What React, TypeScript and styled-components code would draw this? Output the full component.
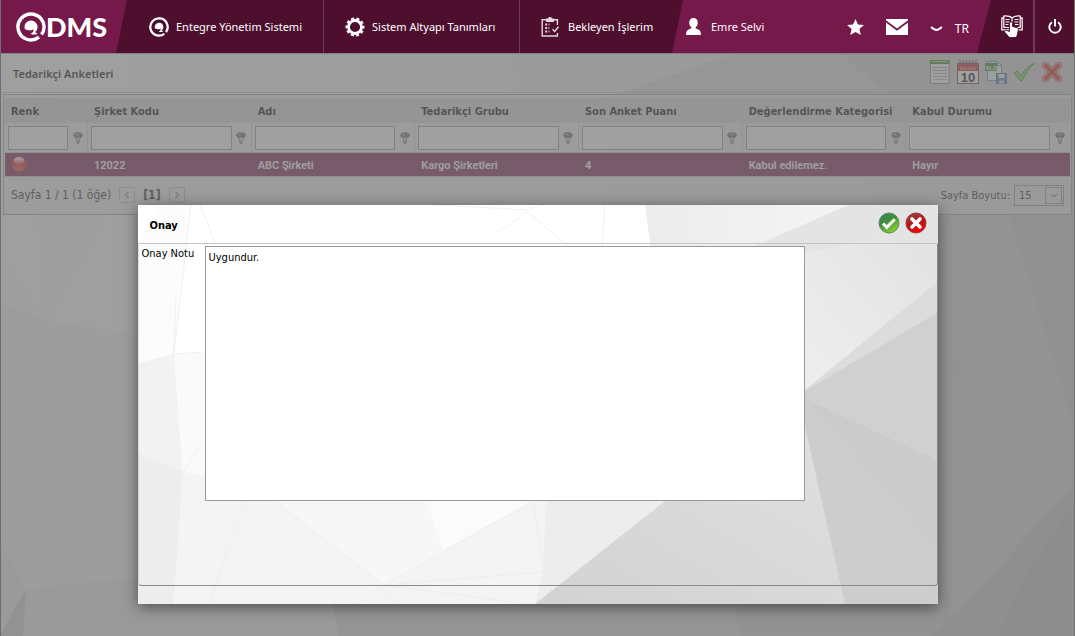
import React from "react";
import styled, { createGlobalStyle, css } from "styled-components";

const uiFont = '"DejaVu Sans Condensed", "DejaVu Sans", sans-serif';
const menuFont = '"Noto Sans", "Open Sans", sans-serif';
const plum = "#75184a";
const darkPlum = "#4e0f2f";

const GlobalStyle = createGlobalStyle`
  *, *::before, *::after { box-sizing: border-box; }
  html, body, #root { height: 100%; }
  body { margin: 0; background: #6e6e6e; font: 11px ${uiFont}; color: #000; }
  button { font: inherit; color: inherit; background: none; border: 0; padding: 0; cursor: pointer; }
`;

const Shell = styled.div`
  min-height: 100%;
  display: flex;
  flex-direction: column;
  padding: 0 1px;
`;

/* ---------- top bar ---------- */

const TopBar = styled.header`
  display: flex;
  height: 53px;
  flex: none;
  background: ${darkPlum};
  color: #fff;
  font: 11px ${menuFont};
`;

const Brand = styled.a`
  display: flex;
  align-items: center;
  width: 126px;
  padding-left: 15px;
  background: ${plum};
  color: #fff;
  text-decoration: none;
  clip-path: polygon(0 0, 100% 0, calc(100% - 11px) 100%, 0 100%);
`;

const BrandText = styled.span`
  font: 900 27px/30px Lato, sans-serif;
`;

const Menu = styled.nav`
  display: flex;
  padding-left: 1px;
`;

const MenuItem = styled.a`
  display: flex;
  align-items: center;
  gap: 7px;
  min-width: 196px;
  padding: 0 18px 0 21px;
  color: #fff;
  text-decoration: none;
  white-space: nowrap;
  border-right: 1px solid #6b3a55;
  svg { flex: none; }
  &:last-child { min-width: 152px; padding-right: 0; border-right: 0; }
`;

const UserPanel = styled.div`
  flex: 1;
  display: flex;
  align-items: center;
  gap: 22px;
  padding: 0 22px 0 14px;
  background: ${plum};
  clip-path: polygon(11px 0, 100% 0, calc(100% - 14px) 100%, 0 100%);
`;

const UserLink = styled.a`
  display: flex;
  align-items: center;
  gap: 10px;
  margin-right: auto;
  color: #fff;
  text-decoration: none;
  white-space: nowrap;
`;

const BarButton = styled.button`
  display: flex;
  align-items: center;
  gap: 12px;
`;

const LanguageButton = styled(BarButton)`
  font-size: 12px;
  padding-top: 4px;
`;

const EdgeButton = styled(BarButton)<{ $width: number; $divided?: boolean }>`
  justify-content: center;
  width: ${(p) => p.$width}px;
  ${(p) => p.$divided && css`border-left: 2px solid #6b3a55;`}
`;

/* ---------- page ---------- */

const Workspace = styled.main`
  position: relative;
  flex: 1;
  display: flex;
  flex-direction: column;
  background: #fff;
`;

const Backdrop = styled.svg`
  position: absolute;
  inset: 0;
  width: 100%;
  height: 100%;
`;

const Page = styled.section`
  position: relative;
`;

const Toolbar = styled.div`
  display: flex;
  align-items: center;
  justify-content: space-between;
  height: 40px;
  padding: 0 10px 2px 12px;
  border-top: 1px solid #999;
  border-bottom: 1px solid #c4c4c4;
`;

const Title = styled.h1`
  margin: 0;
  padding-top: 2px;
  font: 600 11px ${menuFont};
`;

const Tools = styled.div`
  display: flex;
  gap: 4px;
`;

const ToolButton = styled.button`
  display: flex;
  width: 24px;
  height: 26px;
  align-items: center;
  justify-content: center;
`;

const GridPanel = styled.div`
  margin: 1px 2px 0;
  padding: 3px 1px 0;
  border: 1px solid #a4a4a4;
  background: rgba(240, 240, 240, 0.8);
`;

const Grid = styled.table`
  width: 100%;
  table-layout: fixed;
  border-collapse: separate;
  border-spacing: 0;
`;

const NarrowCol = styled.col`
  width: 83px;
`;

const HeadCell = styled.th`
  height: 25px;
  padding: 2px 6px 0;
  background: #dadada;
  font-size: 11px;
  text-align: left;
  white-space: nowrap;
`;

const FilterCell = styled.td`
  height: 30px;
  padding: 0;
  border-right: 1px solid #cfcfcf;
  border-bottom: 1px solid #c4c4c4;
  &:last-child { border-right-color: transparent; }
`;

const FilterBox = styled.div`
  display: flex;
  align-items: center;
  padding-left: 3px;
`;

const FilterInput = styled.input`
  flex: 1;
  min-width: 0;
  height: 24px;
  padding: 0 4px;
  font: 11px ${uiFont};
  background: #fff;
  border: 1px solid #999;
  border-radius: 0;
`;

const FilterButton = styled.button`
  display: flex;
  justify-content: center;
  width: 19px;
`;

const DataCell = styled.td`
  height: 24px;
  padding: 1px 6px 0;
  background: ${plum};
  border-bottom: 1px solid #c4c4c4;
  color: #fff;
  font: 600 11px Roboto, sans-serif;
  white-space: nowrap;
  svg { display: block; margin-top: -2px; }
`;

const Pager = styled.div`
  display: flex;
  align-items: center;
  height: 37px;
  padding: 0 6px 1px;
  gap: 8px;
  font-size: 12px;
  color: #1c1c1c;
`;

const PageButton = styled.button`
  display: flex;
  align-items: center;
  justify-content: center;
  width: 16px;
  height: 16px;
  border: 1px solid #c4c4c4;
  border-radius: 2px;
`;

const CurrentPage = styled.strong`
  font-size: 12px;
`;

const PageSize = styled.label`
  display: flex;
  align-items: center;
  gap: 4px;
  margin-left: auto;
  font-size: 11px;
`;

const SelectBox = styled.span`
  position: relative;
  display: block;
`;

const SizeSelect = styled.select`
  appearance: none;
  display: block;
  width: 50px;
  height: 21px;
  padding: 0 4px;
  font: 11px ${uiFont};
  color: #1c1c1c;
  background: transparent;
  border: 1px solid #999;
  border-radius: 0;
`;

const SelectArrow = styled.span`
  position: absolute;
  top: 2px;
  right: 2px;
  display: flex;
  align-items: center;
  justify-content: center;
  width: 17px;
  height: 17px;
  border: 1px solid #999;
  pointer-events: none;
`;

/* ---------- dialog ---------- */

const Overlay = styled.div`
  position: absolute;
  inset: 0;
  display: flex;
  align-items: flex-start;
  justify-content: center;
  padding: 152px 16px 32px;
  background: rgba(119, 119, 119, 0.7);
`;

const Dialog = styled.section`
  position: relative;
  width: 100%;
  max-width: 800px;
  background: #fff;
  box-shadow: 0 3px 14px rgba(0, 0, 0, 0.5);
`;

const DialogHead = styled.div`
  position: relative;
  display: flex;
  align-items: center;
  justify-content: space-between;
  height: 39px;
  padding: 0 11px 2px 12px;
  border-bottom: 1px solid #c4c4c4;
`;

const DialogTitle = styled.h2`
  margin: 0;
  padding-top: 4px;
  font: 700 11px ${uiFont};
`;

const DialogActions = styled.div`
  display: flex;
  gap: 5px;
  button { display: flex; }
`;

const DialogBody = styled.div`
  position: relative;
  display: flex;
  align-items: flex-start;
  padding: 2px 2px 84px 3px;
  border: 1px solid #8a8a8a;
  border-top: 0;
  border-left-color: rgba(138, 138, 138, 0.25);
  border-radius: 0 0 4px 4px;
`;

const FieldLabel = styled.label`
  flex: none;
  width: 63px;
  padding-top: 1px;
`;

const NoteArea = styled.textarea`
  flex: 0 1 600px;
  min-width: 0;
  height: 255px;
  padding: 4px 3px;
  font: 11px ${uiFont};
  color: #000;
  background: #fff;
  border: 1px solid #999;
  border-radius: 0;
  resize: none;
`;

const DialogFoot = styled.div`
  height: 18px;
`;

/* ---------- drawings ---------- */

const QMark = ({ size }: { size: number }) => (
  <svg width={size} height={size} viewBox="0 0 30 30" fill="none" aria-hidden="true">
    <path d="M23 25.200A13 13 0 1 1 25.500 22.600" stroke="#fff" strokeWidth="3.400" />
    <path d="M15.200 8.500a6.500 6.500 0 0 1 6.300 6.500c0 2.200-.9 3.900-2.300 5.100l2.300 1.900c-2.600 1-5.300.7-7-.3 2.200-.8 3.400-2.400 3-4.200-2.800 1.200-6.200 1.200-8.700-.5A6.500 6.500 0 0 1 15.200 8.500z" fill="#fff" />
  </svg>
);

const GearIcon = () => (
  <svg width="20" height="20" viewBox="0 0 20 20" fill="none" stroke="#fff" aria-hidden="true">
    <circle cx="10" cy="10" r="6.500" strokeWidth="2.800" />
    <circle cx="10" cy="10" r="8.400" strokeWidth="2.200" strokeDasharray="3 2.278" strokeDashoffset="1.500" />
  </svg>
);

const ClipboardIcon = () => (
  <svg width="20" height="20" viewBox="0 0 20 20" fill="none" stroke="#e6d9e0" strokeWidth="1.400" aria-hidden="true">
    <path d="M5.500 2.700H1.200v16.300h15.200v-3M16.400 8V2.700h-4.200" />
    <path d="M5.800 4.200V2.200h1.700a1.500 1.500 0 0 1 3 0h1.700v2z" fill="#e6d9e0" />
    <path d="M4.200 7.500h2M4.200 11h2M4.200 14.500h2M7.600 7.500h.8M7.600 11h.8M7.600 14.500h.8" strokeWidth="1.800" />
    <path d="M11.500 12.200l2.200 2.300 3.800-4.700" />
  </svg>
);

const UserIcon = () => (
  <svg width="15" height="17" viewBox="0 0 15 17" fill="#fff" aria-hidden="true">
    <path d="M7.500 0c2.600 0 4.300 1.900 4.300 4.500 0 2.100-.9 4-2.300 5 .2 1 1 1.300 2.400 1.700 2.200.7 3 2.600 3.100 5.800H0c.1-3.200.9-5.100 3.100-5.800 1.400-.4 2.200-.7 2.400-1.700-1.400-1-2.300-2.900-2.300-5C3.200 1.900 4.900 0 7.500 0z" />
  </svg>
);

const StarIcon = () => (
  <svg width="17" height="16" viewBox="0 0 17 16" fill="#fff" aria-hidden="true">
    <path d="M8.500 0l2.400 5.500 6.100.6-4.600 4 1.400 5.900-5.300-3.100L3.200 16l1.400-5.900L0 6.100l6.100-.6z" />
  </svg>
);

const MailIcon = () => (
  <svg width="22" height="16" viewBox="0 0 22 16" fill="#fff" aria-hidden="true">
    <path d="M0 0h22v1.200L11 9.500 0 1.200z" />
    <path d="M0 3.500l11 8.300 11-8.300V16H0z" />
  </svg>
);

const CaretIcon = () => (
  <svg width="13" height="6" viewBox="0 0 13 6" fill="none" stroke="#fff" strokeWidth="2" aria-hidden="true">
    <path d="M1 1c1.500 1 3.500 3 5.500 3S10.500 2 12 1" />
  </svg>
);

const GuideIcon = () => (
  <svg width="22" height="23" viewBox="0 0 22 23" fill="none" stroke="#fff" aria-hidden="true">
    <path d="M11 3C9 1 6 .8 2.800 1v1.800H.8v12H8M11 3c2-2 5-2.200 8.200-2v1.800h2v12H16M2.800 2.800v9.500c2.500-.2 4.200 0 5.500.6M19.200 2.800v9.500c-1.500-.1-2.500 0-3.500.3M11 3v4" strokeWidth="1.200" />
    <path d="M4.500 4.500h4M4.500 7h4M4.500 9.500h3M13.500 4.500h4M13.500 7h4M14 9.500h3.500" strokeWidth="1" />
    <path d="M8.400 16.500V8.300a1.600 1.600 0 0 1 3.200 0v3.200l4.400 1c1.200.3 1.500 1.200 1.400 2.200l-.9 4.600-1.200 3.300H8.300L3.800 17.200c-.9-1.500.7-2.700 2-1.900z" fill="#fff" stroke={darkPlum} strokeWidth="1" />
  </svg>
);

const PowerIcon = () => (
  <svg width="14" height="15" viewBox="0 0 14 15" fill="none" stroke="#fff" strokeWidth="1.900" aria-hidden="true">
    <path d="M4 3.200a5.700 5.700 0 1 0 6 0M7 0v7.500" />
  </svg>
);

const SheetIcon = () => (
  <svg width="20" height="24" viewBox="0 0 20 24" aria-hidden="true">
    <path d="M.5 1.500h18.500v22H.5z" fill="#fafafa" stroke="#888" />
    <path d="M0 0h19.500v4H0z" fill="#2f8a17" />
    <path d="M2 1.500h15" stroke="#b7eb9d" />
    <path d="M3 7.500h14M3 10.500h14M3 13.500h14M3 16.500h14M3 19.500h14" stroke="#aaa" />
  </svg>
);

const CalendarIcon = () => (
  <svg width="22" height="24" viewBox="0 0 22 24" aria-hidden="true">
    <path d="M.5 3.500h21v20H.5z" fill="#fff" stroke="#6a3a22" />
    <path d="M1 4h20v7H1z" fill="#c8221c" />
    <path d="M3 8.500h7M12 8.500h7" stroke="#f3a9a2" strokeWidth="2" strokeDasharray="1.500 1" />
    <path d="M3 0v5M6.200 0v5M9.400 0v5M12.600 0v5M15.800 0v5M19 0v5" stroke="#746" strokeWidth="1.300" />
    <text x="11" y="21.500" textAnchor="middle" fontFamily="Liberation Sans, sans-serif" fontWeight="700" fontSize="13" fill="#000">10</text>
  </svg>
);

const XlsIcon = () => (
  <svg width="24" height="24" viewBox="0 0 24 24" aria-hidden="true">
    <path d="M3.500 1.500h10l4 4v15h-14z" fill="#f2f8ff" stroke="#5b93bd" />
    <path d="M13.500 1.500v4h4" fill="none" stroke="#5b93bd" />
    <path d="M1 3h12v8H1z" fill="#2c7d1d" />
    <text x="7" y="9.500" textAnchor="middle" fontFamily="Liberation Sans, sans-serif" fontWeight="700" fontSize="6" fill="#fff">XLS</text>
    <path d="M12.500 13.500h10v10h-10z" fill="#4b86bd" stroke="#2f5f93" />
    <path d="M14.500 14h6v4h-6z" fill="#eef5fb" />
    <path d="M15 20.500h5v3h-5z" fill="#c9dbea" />
  </svg>
);

const ApproveIcon = () => (
  <svg width="22" height="20" viewBox="0 0 22 20" aria-hidden="true">
    <path d="M1 11l3-2 4 4.500C11 8 15 4 21 1.500 16 6.500 12 12 9 18.500H7.500z" fill="#7fdc5c" stroke="#2b8a1d" strokeLinejoin="round" />
  </svg>
);

const RejectIcon = () => (
  <svg width="20" height="20" viewBox="0 0 20 20" aria-hidden="true">
    <path d="M3.500 3.500l13 13M16.500 3.500l-13 13" stroke="#b31812" strokeWidth="7" strokeLinecap="round" />
    <path d="M3.500 3.500l13 13M16.500 3.500l-13 13" stroke="#fbd5d0" strokeWidth="5.600" strokeLinecap="round" />
    <path d="M3.500 3.500l13 13M16.500 3.500l-13 13" stroke="#d8241c" strokeWidth="4" strokeLinecap="round" />
  </svg>
);

const FunnelIcon = () => (
  <svg width="10" height="12" viewBox="0 0 10 12" aria-hidden="true">
    <path d="M.8 3.500C1 5.500 3.900 6 3.900 7.500v3.600h2.200V7.500C6.100 6 9 5.500 9.200 3.500" fill="#eee" stroke="#444" strokeWidth=".9" />
    <ellipse cx="5" cy="3" rx="4.200" ry="2.200" fill="#777" stroke="#444" strokeWidth=".8" />
    <path d="M2.500 2.400h2.500" stroke="#ddd" strokeWidth=".8" />
  </svg>
);

const RedBall = () => (
  <svg width="16" height="16" viewBox="0 0 16 16" aria-hidden="true">
    <defs>
      <linearGradient id="ball" x1="0" y1="0" x2="0" y2="1">
        <stop offset="0" stopColor="#d8140c" />
        <stop offset=".5" stopColor="#d8140c" />
        <stop offset="1" stopColor="#f0513d" />
      </linearGradient>
      <linearGradient id="shine" x1="0" y1="0" x2="0" y2="1">
        <stop offset="0" stopColor="#fff" />
        <stop offset="1" stopColor="#fff" stopOpacity=".25" />
      </linearGradient>
    </defs>
    <circle cx="8" cy="8" r="7.500" fill="url(#ball)" stroke="#8c2a2a" />
    <ellipse cx="8" cy="4.500" rx="5.200" ry="3.600" fill="url(#shine)" />
  </svg>
);

const Chevron = ({ d }: { d: string }) => (
  <svg width="8" height="8" viewBox="0 0 8 8" fill="none" stroke="#888" strokeWidth="1.200" aria-hidden="true">
    <path d={d} />
  </svg>
);

const OkBadge = () => (
  <svg width="22" height="22" viewBox="0 0 22 22" aria-hidden="true">
    <defs>
      <linearGradient id="ok" x1="0" y1="0" x2=".6" y2="1">
        <stop offset="0" stopColor="#3f7f6c" />
        <stop offset=".5" stopColor="#3f9038" />
        <stop offset="1" stopColor="#8ad030" />
      </linearGradient>
    </defs>
    <circle cx="11" cy="11" r="10" fill="url(#ok)" stroke="#5a8a5c" />
    <path d="M5 11.500l3.800 3.800 8-8" fill="none" stroke="#fff" strokeWidth="3" />
  </svg>
);

const CancelBadge = () => (
  <svg width="22" height="22" viewBox="0 0 22 22" aria-hidden="true">
    <defs>
      <linearGradient id="cancel" x1=".2" y1="0" x2=".6" y2="1">
        <stop offset="0" stopColor="#9c4444" />
        <stop offset=".5" stopColor="#b01818" />
        <stop offset="1" stopColor="#ff0000" />
      </linearGradient>
    </defs>
    <circle cx="11" cy="11" r="10" fill="url(#cancel)" stroke="#9c3434" />
    <path d="M7 7l8 8M15 7l-8 8" stroke="#fff" strokeWidth="3.600" strokeLinecap="round" />
  </svg>
);

const PageFacets = () => (
  <Backdrop viewBox="0 0 1073 583" preserveAspectRatio="none" aria-hidden="true">
    <defs>
      <linearGradient id="sheet" x1="0" y1="0" x2="1" y2="0">
        <stop offset="0" stopColor="#fcfcfc" />
        <stop offset=".45" stopColor="#f4f4f4" />
        <stop offset="1" stopColor="#d2d2d2" />
      </linearGradient>
    </defs>
    <path d="M0 0h1073v583H0z" fill="url(#sheet)" />
    <path d="M509 0h226L626 40H515z" fill="#eee" />
    <path d="M735 0h338v60H560z" fill="#dcdcdc" />
    <path d="M840 0h233v60H905z" fill="#d2d2d2" />
    <path d="M0 250l45 18 92 14v301H0z" fill="#f2f2f2" />
    <path d="M45 268L25 536l112-12V282z" fill="#f5f5f5" />
    <path d="M37 160l8 108L0 205v45l45 18 60-108z" fill="#f7f7f7" />
    <path d="M0 490l25 46 112-12 500 24v35H0z" fill="#eaeaea" />
    <path d="M25 536L0 580v3h22z" fill="#cfcfcf" />
    <path d="M332 550h400l8 33H338z" fill="#dadada" />
    <path d="M732 550h341v33H740z" fill="#cfcfcf" />
    <path d="M936 160h72l64 215v55l-78 89-60 64z" fill="#d2d2d2" />
    <path d="M1008 160h65v215z" fill="#cccccc" />
    <path d="M936 300l57 55 80 75v-55z" fill="#d0d0d0" />
    <path d="M1073 430l-79 89-65 64h144z" fill="#c5c5c5" />
    <path d="M1073 450l-54 82-21 51h75z" fill="#bebebe" />
  </Backdrop>
);

const DialogFacets = () => (
  <Backdrop viewBox="0 0 800 399" preserveAspectRatio="none" aria-hidden="true">
    <defs>
      <linearGradient id="facetA" x1="0" y1="0" x2="1" y2="0">
        <stop offset="0" stopColor="#ececec" />
        <stop offset="1" stopColor="#f5f5f5" />
      </linearGradient>
      <linearGradient id="facetB" x1="0" y1="1" x2="1" y2="0">
        <stop offset="0" stopColor="#eeeeee" />
        <stop offset="1" stopColor="#e2e2e2" />
      </linearGradient>
      <linearGradient id="facetC" x1="0" y1="1" x2="1" y2="0">
        <stop offset="0" stopColor="#d2d2d2" />
        <stop offset="1" stopColor="#e0e0e0" />
      </linearGradient>
    </defs>
    <path d="M0 0h800v399H0z" fill="#fff" />
    <path d="M25 0h28L36 149 0 158V40z" fill="#fcfcfc" />
    <path d="M507 0h213v60H515z" fill="url(#facetA)" />
    <path d="M710 0h90v22L666 49 596 50z" fill="#e4e4e4" />
    <path d="M666 49l134-30v57L667 186z" fill="url(#facetB)" />
    <path d="M800 76v31L667 187v-2z" fill="#dcdcdc" />
    <path d="M800 107v148L667 193v-7z" fill="#d0d0d0" />
    <path d="M667 193l133 62v144h-94l-39-170z" fill="#cdcdcd" />
    <path d="M667 193l133 62v90z" fill="#cbcbcb" />
    <path d="M0 158l36-9 9 118-45-19z" fill="#f2f2f2" />
    <path d="M36 149l31-2v123l-22-3z" fill="#fafafa" />
    <path d="M0 248l45 19-9 132H0z" fill="#ededed" />
    <path d="M45 267l22 3v26h350v103H36z" fill="#f4f4f4" />
    <path d="M137 296h258L246 380z" fill="#f7f7f7" />
    <path d="M288 296h107l-90 49z" fill="#fbfbfb" />
    <path d="M408 296h127L397 399l8-32z" fill="#ededed" />
    <path d="M667 222l40 177H397l130-103z" fill="url(#facetC)" />
    <path
      d="M107 296L72 399M137 296l109 84 149-84 11 71-160 13 144 19M246 380l11 19M246 380l-28 19M406 367l101-71M45 267l22-34M36 149L38 88M36 149l31-2M53 0L36 149M62 0l16 40M300 0l90 5 15-5M390 7l-30 20M390 7l40 34M467 0l-3 41"
      fill="none"
      stroke="#ebebeb"
      strokeWidth=".7"
    />
  </Backdrop>
);

/* ---------- screen ---------- */

const columns = [
  { title: "Renk", value: "" },
  { title: "Şirket Kodu", value: "12022" },
  { title: "Adı", value: "ABC Şirketi" },
  { title: "Tedarikçi Grubu", value: "Kargo Şirketleri" },
  { title: "Son Anket Puanı", value: "4" },
  { title: "Değerlendirme Kategorisi", value: "Kabul edilemez." },
  { title: "Kabul Durumu", value: "Hayır" },
];

export default function App() {
  return (
    <>
      <GlobalStyle />
      <Shell>
        <TopBar>
          <Brand href="#">
            <QMark size={30} />
            <BrandText>DMS</BrandText>
          </Brand>
          <Menu>
            <MenuItem href="#"><QMark size={20} />Entegre Yönetim Sistemi</MenuItem>
            <MenuItem href="#"><GearIcon />Sistem Altyapı Tanımları</MenuItem>
            <MenuItem href="#"><ClipboardIcon />Bekleyen İşlerim</MenuItem>
          </Menu>
          <UserPanel>
            <UserLink href="#"><UserIcon />Emre Selvi</UserLink>
            <BarButton aria-label="Favoriler"><StarIcon /></BarButton>
            <BarButton aria-label="Mesajlar"><MailIcon /></BarButton>
            <LanguageButton><CaretIcon />TR</LanguageButton>
          </UserPanel>
          <EdgeButton $width={42} aria-label="Yardım"><GuideIcon /></EdgeButton>
          <EdgeButton $width={41} $divided aria-label="Çıkış"><PowerIcon /></EdgeButton>
        </TopBar>

        <Workspace>
          <PageFacets />
          <Page>
            <Toolbar>
              <Title>Tedarikçi Anketleri</Title>
              <Tools>
                <ToolButton aria-label="Liste"><SheetIcon /></ToolButton>
                <ToolButton aria-label="Takvim"><CalendarIcon /></ToolButton>
                <ToolButton aria-label="Excel"><XlsIcon /></ToolButton>
                <ToolButton aria-label="Onayla"><ApproveIcon /></ToolButton>
                <ToolButton aria-label="Reddet"><RejectIcon /></ToolButton>
              </Tools>
            </Toolbar>

            <GridPanel>
              <Grid>
                <colgroup>
                  <NarrowCol />
                </colgroup>
                <thead>
                  <tr>
                    {columns.map((c) => <HeadCell key={c.title} scope="col">{c.title}</HeadCell>)}
                  </tr>
                </thead>
                <tbody>
                  <tr>
                    {columns.map((c) => (
                      <FilterCell key={c.title}>
                        <FilterBox>
                          <FilterInput aria-label={c.title} />
                          <FilterButton aria-label={`${c.title} filtresi`}><FunnelIcon /></FilterButton>
                        </FilterBox>
                      </FilterCell>
                    ))}
                  </tr>
                  <tr>
                    {columns.map((c) => <DataCell key={c.title}>{c.value || <RedBall />}</DataCell>)}
                  </tr>
                </tbody>
              </Grid>
              <Pager>
                <span>Sayfa 1 / 1 (1 öğe)</span>
                <PageButton aria-label="Önceki"><Chevron d="M5.500 1L2.500 4l3 3" /></PageButton>
                <CurrentPage>[1]</CurrentPage>
                <PageButton aria-label="Sonraki"><Chevron d="M2.500 1l3 3-3 3" /></PageButton>
                <PageSize>
                  Sayfa Boyutu:
                  <SelectBox>
                    <SizeSelect defaultValue="15">
                      <option>15</option>
                      <option>30</option>
                    </SizeSelect>
                    <SelectArrow><Chevron d="M1 3l3 3 3-3" /></SelectArrow>
                  </SelectBox>
                </PageSize>
              </Pager>
            </GridPanel>
          </Page>

          <Overlay>
            <Dialog role="dialog" aria-labelledby="dialog-title">
              <DialogFacets />
              <DialogHead>
                <DialogTitle id="dialog-title">Onay</DialogTitle>
                <DialogActions>
                  <button aria-label="Kaydet"><OkBadge /></button>
                  <button aria-label="Kapat"><CancelBadge /></button>
                </DialogActions>
              </DialogHead>
              <DialogBody>
                <FieldLabel htmlFor="note">Onay Notu</FieldLabel>
                <NoteArea id="note" defaultValue="Uygundur." />
              </DialogBody>
              <DialogFoot />
            </Dialog>
          </Overlay>
        </Workspace>
      </Shell>
    </>
  );
}
